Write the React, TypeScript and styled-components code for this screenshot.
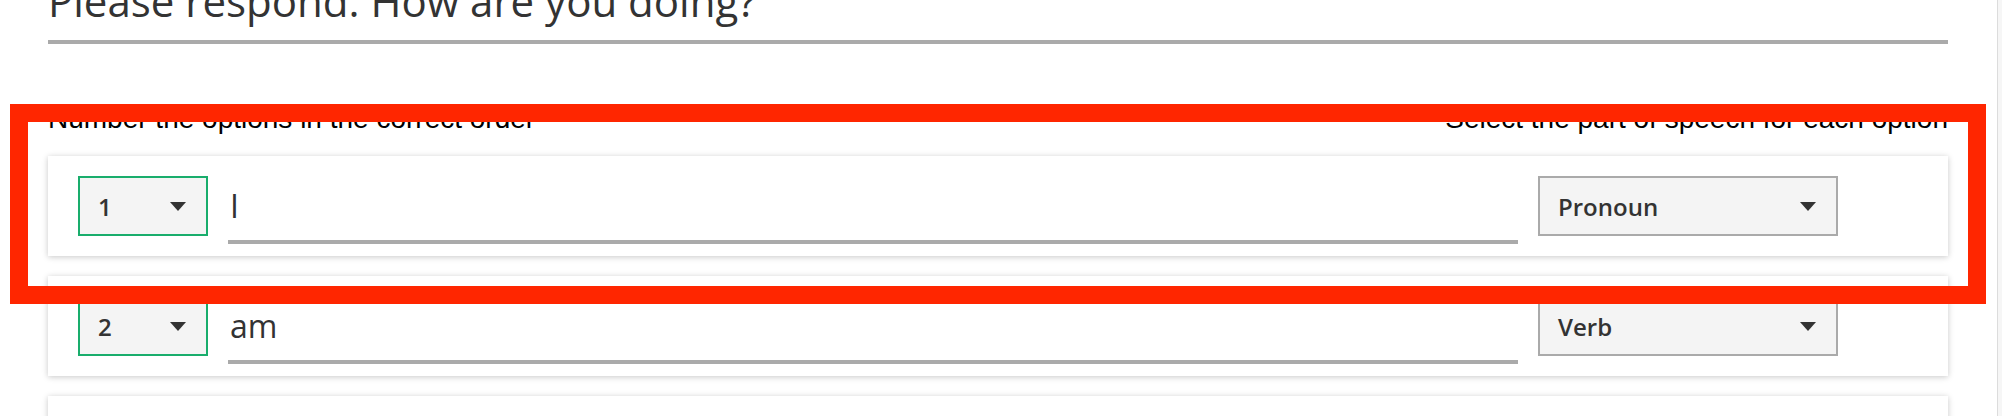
import React from "react";
import styled, { createGlobalStyle } from "styled-components";

const GlobalStyle = createGlobalStyle`
  html, body {
    margin: 0;
    padding: 0;
    background: #ffffff;
    overflow: hidden;
  }
  * { box-sizing: border-box; }
`;

const Page = styled.div`
  display: flex;
  width: 2002px;
  height: 416px;
  overflow: hidden;
  position: relative;
`;

const Main = styled.main`
  flex: 1;
  padding-left: 48px;
`;

const Content = styled.div`
  width: 1900px;
  display: flex;
  flex-direction: column;
`;

const Title = styled.h1`
  margin: -21px 0 0;
  padding-bottom: 17px;
  font-family: "Open Sans", sans-serif;
  font-weight: 400;
  font-size: 42px;
  line-height: 44px;
  color: #333333;
  border-bottom: 4px solid #aaaaaa;
`;

const LabelRow = styled.div`
  display: flex;
  justify-content: space-between;
  margin-top: 59px;
  font-family: "Liberation Sans", Arial, sans-serif;
  font-size: 28px;
  line-height: 32px;
  color: #000000;
`;

const Rows = styled.div`
  display: flex;
  flex-direction: column;
  gap: 20px;
  margin-top: 21px;
`;

const Card = styled.div`
  height: 100px;
  background: #ffffff;
  box-shadow: 0 1px 6px rgba(0, 0, 0, 0.22);
  display: flex;
  align-items: flex-start;
  gap: 20px;
  padding: 20px 110px 0 30px;
`;

const SelectBox = styled.div<{ $accent?: boolean; $width: number }>`
  width: ${(p) => p.$width}px;
  height: 60px;
  flex: none;
  display: flex;
  align-items: center;
  justify-content: space-between;
  padding: 0 20px 0 18px;
  background: #f4f4f4;
  border: 2px solid ${(p) => (p.$accent ? "#19ad6c" : "#aaaaaa")};
  font-family: "Open Sans", sans-serif;
  font-weight: 600;
  font-size: 24px;
  color: #333333;
`;

const Caret = styled.svg`
  width: 16px;
  height: 9px;
  flex: none;
`;

const TextInput = styled.input`
  flex: 1;
  min-width: 0;
  height: 68px;
  margin: 0;
  padding: 0 2px 6px;
  border: none;
  border-bottom: 4px solid #aaaaaa;
  outline: none;
  background: transparent;
  font-family: "Open Sans", sans-serif;
  font-size: 32px;
  color: #333333;
`;

const ScrollTrack = styled.div`
  width: 5px;
  flex: none;
  background: #f6f6f6;
  border-left: 1px solid #dcdcdc;
`;

const Highlight = styled.div`
  position: absolute;
  left: 10px;
  top: 104px;
  width: 1976px;
  height: 200px;
  border: 18px solid #ff2600;
  pointer-events: none;
`;

const rows = [
  { n: "1", word: "I", pos: "Pronoun" },
  { n: "2", word: "am", pos: "Verb" },
  { n: "3", word: "", pos: "" },
];

const Arrow = () => (
  <Caret viewBox="0 0 16 9">
    <path d="M0 0 L16 0 L8 9 Z" fill="#333333" />
  </Caret>
);

export default function App() {
  return (
    <>
      <GlobalStyle />
      <Page>
        <Main>
          <Content>
            <Title>Please respond. How are you doing?</Title>
            <LabelRow>
              <span>Number the options in the correct order</span>
              <span>Select the part of speech for each option</span>
            </LabelRow>
            <Rows>
              {rows.map((r) => (
                <Card key={r.n}>
                  <SelectBox $accent $width={130}>
                    <span>{r.n}</span>
                    <Arrow />
                  </SelectBox>
                  <TextInput readOnly defaultValue={r.word} />
                  <SelectBox $width={300}>
                    <span>{r.pos}</span>
                    <Arrow />
                  </SelectBox>
                </Card>
              ))}
            </Rows>
          </Content>
        </Main>
        <ScrollTrack />
        <Highlight />
      </Page>
    </>
  );
}
